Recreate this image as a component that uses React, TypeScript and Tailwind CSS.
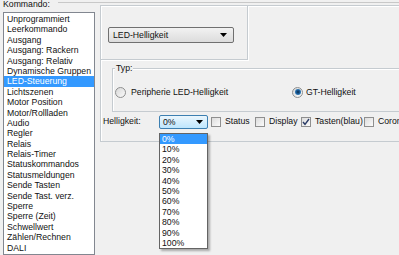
import React from "react";

const items = [
  "Unprogrammiert",
  "Leerkommando",
  "Ausgang",
  "Ausgang: Rackern",
  "Ausgang: Relativ",
  "Dynamische Gruppen",
  "LED-Steuerung",
  "Lichtszenen",
  "Motor Position",
  "Motor/Rollladen",
  "Audio",
  "Regler",
  "Relais",
  "Relais-Timer",
  "Statuskommandos",
  "Statusmeldungen",
  "Sende Tasten",
  "Sende Tast. verz.",
  "Sperre",
  "Sperre (Zeit)",
  "Schwellwert",
  "Zählen/Rechnen",
  "DALI",
];

const percents = ["0%", "10%", "20%", "30%", "40%", "50%", "60%", "70%", "80%", "90%", "100%"];

function Arrow() {
  return (
    <svg width="7" height="4" viewBox="0 0 7 4" className="shrink-0">
      <path d="M0 0 H7 L3.5 4 Z" fill="#000" />
    </svg>
  );
}

function Radio({ checked }: { checked?: boolean }) {
  return (
    <div className="w-[11px] h-[11px] rounded-full border border-[#8e8f8f] bg-gradient-to-br from-[#d8d8d8] to-[#fafafa] flex items-center justify-center shrink-0">
      {checked && (
        <div className="w-[6px] h-[6px] rounded-full bg-[radial-gradient(circle,#0a2a4a_0%,#1b5e9b_45%,#56a6e0_100%)]" />
      )}
    </div>
  );
}

function Check({ checked }: { checked?: boolean }) {
  return (
    <div className="w-[10px] h-[10px] border border-[#8f8f8f] bg-gradient-to-br from-[#dcdcdc] to-[#fbfbfb] flex items-center justify-center shrink-0">
      {checked && (
        <svg width="8" height="8" viewBox="0 0 8 8">
          <path d="M1 4 L3 6.3 L7 1" stroke="#2a3b66" strokeWidth="1.4" fill="none" />
        </svg>
      )}
    </div>
  );
}

export default function App() {
  return (
    <div className="relative w-[399px] h-[255px] overflow-hidden bg-[#f0f0f0] text-[#111] text-[8.7px] font-['Liberation_Sans',Arial,sans-serif] flex">
      {/* Left column */}
      <div className="w-[100px] shrink-0 flex flex-col">
        <div className="h-[12px] flex items-start">
          <span className="ml-[3px] -mt-[1px] leading-[10px]">Kommando:</span>
          <div className="flex-1 mt-[2px] border-t border-[#c8c8c8] ml-[8px]" />
        </div>
        <div className="ml-[3px] w-[92px] flex-1 bg-white border border-[#828790] pt-[1px]">
          {items.map((t) => (
            <div
              key={t}
              className={
                t === "LED-Steuerung"
                  ? "h-[10.4px] leading-[10.4px] pl-[3px] bg-[#3399ff] text-white whitespace-nowrap"
                  : "h-[10.4px] leading-[10.4px] pl-[3px] whitespace-nowrap"
              }
            >
              {t}
            </div>
          ))}
        </div>
      </div>

      {/* Right column */}
      <div className="flex-1 flex flex-col pt-[2px]">
        <div className="h-[3px] border-t border-[#c8c8c8]" />
        <div className="h-[137px] border-l border-t border-b border-[#c5cbd0] shadow-[inset_1px_1px_0_#ffffff] flex flex-col">
          {/* combo box group */}
          <div className="w-[147px] h-[54px] border-r border-b border-[#c5cbd0] shadow-[1px_1px_0_#ffffff] pt-[21px] pl-[7px]">
            <div className="w-[126px] h-[16px] rounded-[2px] border border-[#707070] bg-gradient-to-b from-[#f2f2f2] to-[#dcdcdc] flex items-center pl-[4px] pr-[6px] justify-between">
              <span className="leading-[12px]">LED-Helligkeit</span>
              <Arrow />
            </div>
          </div>

          {/* Typ group */}
          <div className="relative ml-[11px] mt-[8px] h-[44px] border-t border-l border-b border-[#c5cbd0] shadow-[inset_1px_1px_0_#ffffff] flex items-center pt-[4px]">
            <span className="absolute left-[2px] -top-[6px] px-[1px] bg-[#f0f0f0] leading-[10px]">Typ:</span>
            <div className="w-[179px] pl-[2px] flex items-center gap-[5px]">
              <Radio />
              <span className="leading-[11px] whitespace-nowrap">Peripherie LED-Helligkeit</span>
            </div>
            <div className="flex items-center gap-[3px]">
              <Radio checked />
              <span className="leading-[11px] whitespace-nowrap">GT-Helligkeit</span>
            </div>
          </div>

          {/* Helligkeit row */}
          <div className="mt-[3px] h-[14px] flex items-center whitespace-nowrap">
            <span className="ml-[2px] w-[56px]">Helligkeit:</span>
            <div className="w-[49px] h-[14px] rounded-[2px] border border-[#3c7fb1] bg-gradient-to-b from-[#eaf6fd] to-[#bee6fd] flex items-center justify-between pl-[3px] pr-[4px]">
              <span className="leading-[11px]">0%</span>
              <Arrow />
            </div>
            <div className="ml-[3px] w-[44px] flex items-center gap-[4px]">
              <Check />
              <span>Status</span>
            </div>
            <div className="w-[46px] flex items-center gap-[4px]">
              <Check />
              <span>Display</span>
            </div>
            <div className="w-[63px] flex items-center gap-[4px]">
              <Check checked />
              <span>Tasten(blau)</span>
            </div>
            <div className="flex items-center gap-[4px]">
              <Check />
              <span>Corona</span>
            </div>
          </div>
        </div>
      </div>

      {/* Drop-down list overlay */}
      <div className="absolute left-[159px] top-[133px] w-[49px] h-[116px] bg-white border border-[#646464] shadow-[2px_2px_2px_rgba(0,0,0,0.3)]">
        {percents.map((p, i) => (
          <div
            key={p}
            className={
              i === 0
                ? "h-[10.4px] leading-[10.4px] pl-[2px] bg-[#3399ff] text-white"
                : "h-[10.4px] leading-[10.4px] pl-[2px]"
            }
          >
            {p}
          </div>
        ))}
      </div>
    </div>
  );
}
